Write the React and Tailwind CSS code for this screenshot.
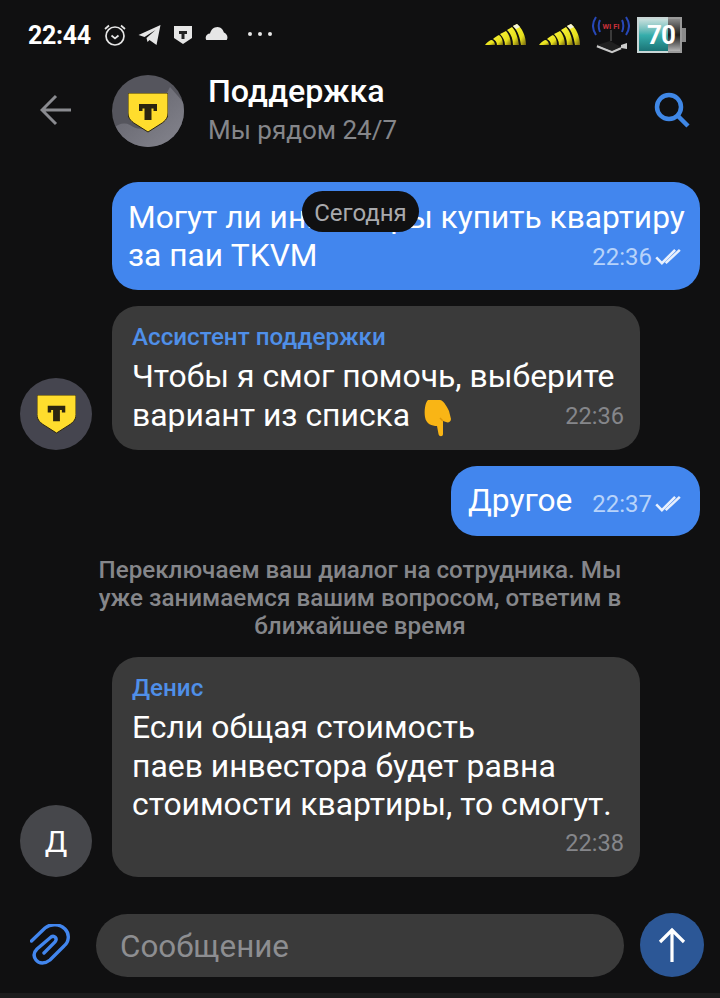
import React from 'react';

const font = { fontFamily: 'Roboto, sans-serif' };

function Shield({ className }) {
    return (
        <svg viewBox="0 0 40 40" className={className}>
            <path d="M0 0H40V20C40 26 36 29 31 32L20 39L9 32C4 29 0 26 0 20Z" fill="#ffdd2d" stroke="#2a2410" strokeWidth="1" />
            <path d="M11 11H29V18H25.5V15.5H23.5V27H16.5V15.5H14.5V18H11Z" fill="#2b2410" />
        </svg>
    );
}

function Checks({ className }) {
    return (
        <svg viewBox="0 0 28 18" fill="none" stroke="currentColor" strokeWidth="2.7" className={className}>
            <path d="M1 10L7 16L21 2" />
            <path d="M11 16L26 2" />
        </svg>
    );
}

function Signal() {
    return (
        <svg viewBox="0 0 42 22" className="w-[42px] h-[22px]">
            <defs>
                <linearGradient id="cone" x1="0" y1="0" x2="1" y2="1">
                    <stop offset="0" stopColor="#fbf63a" />
                    <stop offset="0.65" stopColor="#e6df1c" />
                    <stop offset="1" stopColor="#6e5f10" />
                </linearGradient>
            </defs>
            <path d="M0 21C2 18 5 16 7 16C9 17 10 19 10 21Z" fill="url(#cone)" />
            <path d="M8 15C10 13 12 12 14 11C17 13 18 17 18 21H12C12 18 10 16 8 15Z" fill="url(#cone)" />
            <path d="M15 10L21 7C24 10 26 16 26 21H20C20 17 18 13 15 10Z" fill="url(#cone)" />
            <path d="M22 6L27 3C31 7 33 14 34 21H28C28 15 26 10 22 6Z" fill="url(#cone)" />
            <path d="M28 2L32 0C37 4 41 12 41 21H36C35 14 33 7 28 2Z" fill="url(#cone)" />
            <path d="M28 2L32 0L35 3L31 5Z" fill="#f4f4e0" />
        </svg>
    );
}

function StatusBar() {
    return (
        <div className="h-[70px] pl-[28px] pr-[34px] flex items-start justify-between">
            <div className="flex items-center h-[70px]">
                <span className="text-white font-bold text-[25px] leading-none w-[64px] tracking-[-0.3px]">22:44</span>
                <svg viewBox="0 0 24 24" fill="none" stroke="#e6e6e6" strokeWidth="1.7" className="ml-[11px] w-[24px] h-[24px]">
                    <circle cx="12" cy="13" r="9" />
                    <path d="M8.5 12.5L12 15.5L15.5 12.5M2 6L6 2.5M22 6L18 2.5" />
                </svg>
                <svg viewBox="0 0 22 20" className="ml-[11px] w-[23px] h-[20px]">
                    <path d="M0 10L22 0L18 20L11 15L9 17L8 13L17 5L6 12Z" fill="#e6e6e6" />
                </svg>
                <svg viewBox="0 0 18 20" className="ml-[13px] w-[18px] h-[20px]">
                    <path d="M0 1H18V13L9 19L0 13Z" fill="#e6e6e6" />
                    <path d="M5 6H13V9H10.5V14H7.5V9H5Z" fill="#222" />
                </svg>
                <svg viewBox="0 0 24 14" className="ml-[13px] w-[23px] h-[13px] -mt-[3px]">
                    <path d="M1 14C-1 10 2 7 5 7C6 3 9 0 13 0C17 0 19 3 20 6C23 7 25 11 23 14Z" fill="#e6e6e6" />
                </svg>
                <div className="ml-[20px] -mt-[2px] flex gap-[6px]">
                    <div className="w-[4px] h-[4px] rounded-full bg-[#e6e6e6]"></div>
                    <div className="w-[4px] h-[4px] rounded-full bg-[#e6e6e6]"></div>
                    <div className="w-[4px] h-[4px] rounded-full bg-[#e6e6e6]"></div>
                </div>
            </div>
            <div className="flex items-center gap-[12px] h-[70px]">
                <Signal />
                <Signal />
                <svg viewBox="0 0 38 38" className="w-[38px] h-[38px] -ml-[1px]" fill="none">
                    <path d="M4 1C0 7 0 13 4 19M8 4C6 8 6 11 8 16M34 1C38 7 38 13 34 19M30 4C32 8 32 11 30 16" stroke="#2748b8" strokeWidth="2" />
                    <text x="19" y="13" textAnchor="middle" fontSize="7.5" fontWeight="700" fill="#c8303a" style={font}>WI FI</text>
                    <path d="M19 14V25" stroke="#666" strokeWidth="1" />
                    <path d="M5 30L20 36L29 32" stroke="#c9c9c9" strokeWidth="2.5" />
                    <path d="M5 29L18 25L29 31L20 35Z" fill="#202020" />
                    <path d="M29 29L35 27V33L29 32Z" fill="#ccc" />
                </svg>
                <div className="relative w-[49px] h-[36px] -ml-[5px] flex">
                    <div className="w-[31px] bg-linear-to-b from-[#c8e0de] via-[#36aeac] to-[#1b7476] border-y-2 border-l-2 border-[#c9d6d6]"></div>
                    <div className="w-[14px] bg-linear-to-b from-[#8a8a8a] via-[#1e1e1e] to-[#b5b5b5] border-y-2 border-r-2 border-[#9a9a9a]"></div>
                    <div className="w-[4px] h-[14px] self-center bg-[#8a8a8a]"></div>
                    <span className="absolute left-[10px] top-[5px] text-white font-bold text-[26px] leading-none tracking-[-1px]">70</span>
                </div>
            </div>
        </div>
    );
}

function HeaderAvatar() {
    return (
        <div className="ml-[40px] mt-[2px] relative w-[72px] h-[72px] rounded-full overflow-hidden flex items-center justify-center">
            <svg viewBox="0 0 72 72" className="absolute inset-0 w-[72px] h-[72px]">
                <defs>
                    <linearGradient id="band" x1="0" y1="0" x2="1" y2="1">
                        <stop offset="0" stopColor="#5e5e67" />
                        <stop offset="1" stopColor="#85858e" />
                    </linearGradient>
                </defs>
                <rect width="72" height="72" fill="#55555d" />
                <path d="M0 54C6 49 12 47 18 50C24 54 30 56 38 50L58 12L72 28V72H0Z" fill="url(#band)" />
            </svg>
            <Shield className="relative w-[40px] h-[40px] mt-[4px]" />
        </div>
    );
}

function Header() {
    return (
        <div className="h-[80px] pl-[40px] pr-[30px] flex items-center">
            <svg viewBox="0 0 32 32" fill="none" stroke="#8a8b90" strokeWidth="3" className="w-[32px] h-[32px]">
                <path d="M31 16H3M16 2L2 16L16 30" />
            </svg>
            <HeaderAvatar />
            <div className="ml-[24px] mt-[2px] flex-1">
                <div className="text-white font-medium text-[32.2px] leading-[36px]">Поддержка</div>
                <div className="mt-[2px] text-[#85868a] text-[26px] leading-[38px]">Мы рядом 24/7</div>
            </div>
            <svg viewBox="0 0 36 36" fill="none" stroke="#3f87e6" strokeWidth="4.5" className="w-[36px] h-[36px]">
                <circle cx="15" cy="15" r="12" />
                <path d="M24 24L34 34" />
            </svg>
        </div>
    );
}

function Incoming({ name, avatar, children, time, height, timeOffset }) {
    return (
        <div className="flex items-end pl-[20px]">
            {avatar}
            <div className={`ml-[20px] w-[528px] ${height} relative rounded-[26px] bg-[#3a3a3a] pl-[20px] pr-[16px] pt-[16px]`}>
                <div className="text-[#4f8fe8] font-medium text-[24.2px] leading-[30px]">{name}</div>
                <div className="text-white text-[31.9px] leading-[38.5px] pt-[5px]">{children}</div>
                <span className={`absolute right-[16px] ${timeOffset} text-[#85868a] text-[23.6px] leading-none`}>{time}</span>
            </div>
        </div>
    );
}

function HandDown() {
    return (
        <svg viewBox="0 0 30 38" className="inline-block w-[30px] h-[38px] ml-[13px] align-[-11px]">
            <path d="M5 1H17C20 1 23 6 26 12L28 20C28 23 25 24 23 23L20 22V35C20 38 16 38 15.5 35L14 27C9 27 3 25 2 18C1 12 2 4 5 1Z" fill="#f9b515" />
            <path d="M20 22L17 19" stroke="#dc9508" strokeWidth="1.5" fill="none" />
        </svg>
    );
}

function App() {
    return (
        <div className="relative w-[720px] h-[998px] overflow-hidden bg-[#101011] flex flex-col" style={font}>
            <StatusBar />
            <Header />

            <div className="absolute left-[302px] top-[191px] w-[117px] h-[41px] pt-[2px] rounded-full bg-[#101011] text-[#a9aaad] text-[24px] flex items-center justify-center z-10">
                Сегодня
            </div>

            <div className="pt-[32px] flex flex-col">
                <div className="ml-[112px] mr-[20px] h-[108px] relative rounded-[26px] bg-[#4286ee] pl-[16px] pt-[17px] text-white text-[31.7px] leading-[37.5px]">
                    <div>Могут ли инвесторы купить квартиру</div>
                    <div>за паи TKVM</div>
                    <div className="absolute right-[18px] bottom-[21px] flex items-center gap-[3px] text-[#b7d3fa]">
                        <span className="text-[24px] leading-none">22:36</span>
                        <Checks className="w-[27px] h-[17px] -mt-[2px] text-[#e8f0fd]" />
                    </div>
                </div>

                <div className="mt-[16px]">
                    <Incoming
                        name="Ассистент поддержки"
                        time="22:36"
                        height="h-[144px]"
                        timeOffset="bottom-[21px]"
                        avatar={
                            <div className="w-[72px] h-[72px] rounded-full bg-[#45454f] flex items-center justify-center">
                                <Shield className="w-[39px] h-[39px]" />
                            </div>
                        }
                    >
                        Чтобы я смог помочь, выберите<br />вариант из списка<HandDown />
                    </Incoming>
                </div>

                <div className="mt-[16px] self-end mr-[20px] w-[249px] h-[70px] rounded-[26px] bg-[#4286ee] pl-[17px] pr-[18px] flex items-center justify-between">
                    <span className="text-white text-[31.7px] leading-none">Другое</span>
                    <div className="flex items-center gap-[3px] text-[#b7d3fa] mt-[6px]">
                        <span className="text-[24px] leading-none">22:37</span>
                        <Checks className="w-[27px] h-[17px] -mt-[2px] text-[#e8f0fd]" />
                    </div>
                </div>

                <div className="mt-[20px] mx-auto w-[540px] text-center text-[#85868a] font-medium text-[24.2px] leading-[28px]">
                    Переключаем ваш диалог на сотрудника. Мы уже занимаемся вашим вопросом, ответим в ближайшее время
                </div>

                <div className="mt-[17px]">
                    <Incoming
                        name="Денис"
                        time="22:38"
                        height="h-[220px]"
                        timeOffset="bottom-[21px]"
                        avatar={
                            <div className="w-[72px] h-[72px] rounded-full bg-[#46474b] text-white text-[30px] flex items-center justify-center">
                                Д
                            </div>
                        }
                    >
                        Если общая стоимость<br />паев инвестора будет равна<br />стоимости квартиры, то смогут.
                    </Incoming>
                </div>
            </div>

            <div className="mt-[36px] pl-[30px] pr-[16px] flex items-center">
                <svg viewBox="0 0 40 42" fill="none" stroke="#4286ee" strokeWidth="3.4" strokeLinecap="round" className="w-[40px] h-[42px]">
                    <path d="M1.5 17L15 4C21 -1 30 0 35 5C40 10 39 18 34 22L20 36C15 40 9 40 6 36C3 32 4 28 7 25L21 13C24 11 28 14 25 18L14 29" />
                </svg>
                <div className="ml-[26px] w-[528px] h-[63px] pt-[4px] rounded-full bg-[#3a3a3a] pl-[24px] flex items-center text-[#8d8e91] text-[31.4px] leading-none">
                    Сообщение
                </div>
                <div className="ml-[16px] w-[64px] h-[64px] rounded-full bg-[#2c5796] flex items-center justify-center">
                    <svg viewBox="0 0 28 36" fill="none" stroke="white" strokeWidth="3.2" className="w-[28px] h-[36px]">
                        <path d="M14 35V2M2 15L14 3L26 15" />
                    </svg>
                </div>
            </div>

            <div className="absolute left-0 right-0 bottom-0 h-[5px] bg-[#1c1c1d]"></div>
        </div>
    );
}

export default App;
